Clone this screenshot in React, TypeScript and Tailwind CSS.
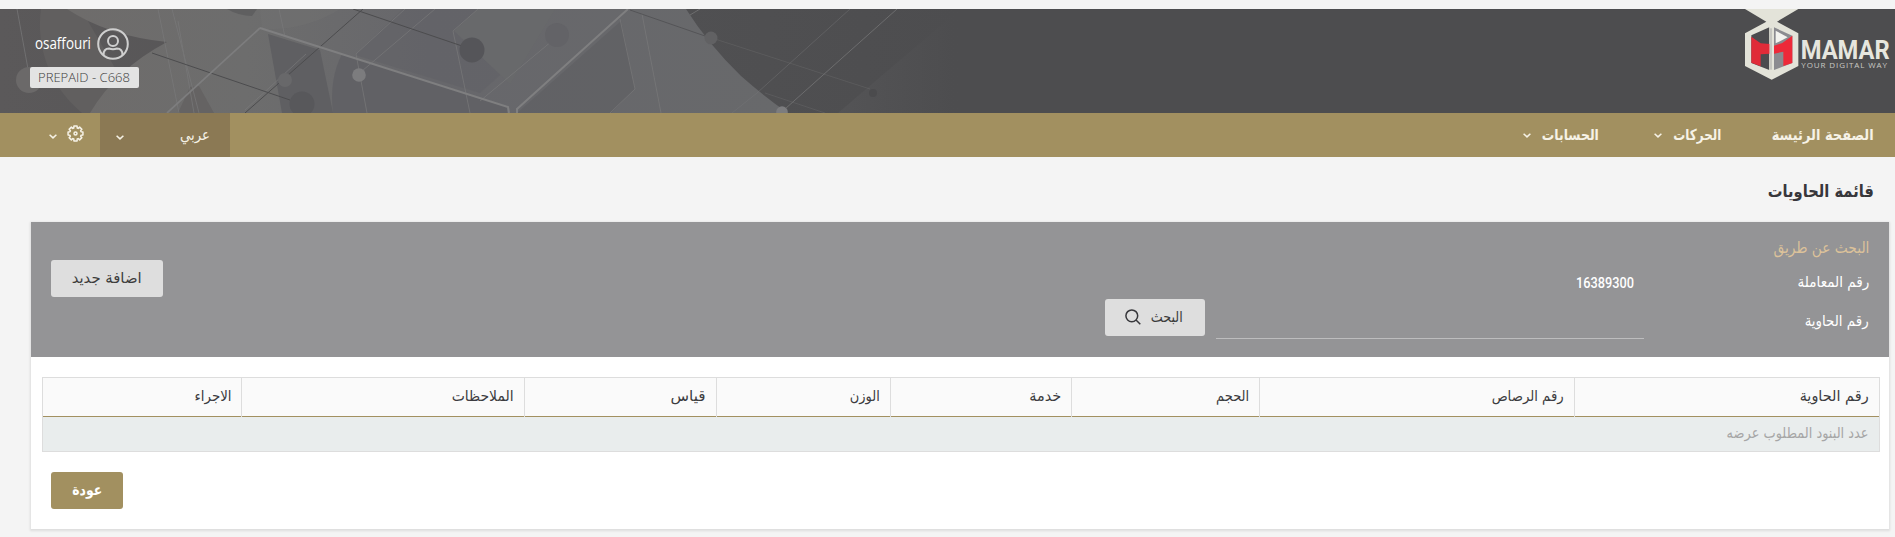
import { useLayoutEffect, useRef, useState } from "react";
import type { ReactNode } from "react";

/* Text squeezed or stretched horizontally so that it fills its box exactly. */
function Fit({ className, children, ltr }: { className: string; children: ReactNode; ltr?: boolean }) {
  const box = useRef<HTMLSpanElement>(null);
  const inner = useRef<HTMLSpanElement>(null);
  const [scale, setScale] = useState(1);
  useLayoutEffect(() => {
    if (box.current && inner.current) setScale(box.current.offsetWidth / inner.current.getBoundingClientRect().width);
  }, []);
  return (
    <span ref={box} dir={ltr ? "ltr" : "rtl"} className={`inline-block shrink-0 whitespace-nowrap ${className}`}>
      <span
        ref={inner}
        className={`inline-block ${ltr ? "origin-left" : "origin-right"}`}
        style={{ transform: `scaleX(${scale})` }}
      >
        {children}
      </span>
    </span>
  );
}

function Chevron({ className = "" }: { className?: string }) {
  return (
    <svg viewBox="0 0 8 5" className={`h-[5px] w-2 shrink-0 ${className}`} fill="none" stroke="#f6f2e6" strokeWidth="1.5">
      <path d="M.6.7 4 3.9 7.4.7" />
    </svg>
  );
}

function HeaderArt() {
  return (
    <svg viewBox="0 0 960 104" className="absolute left-0 top-0 h-[104px] w-[960px]" fill="none">
      <defs>
        <linearGradient id="base" x1="0" x2="1">
          <stop offset="0" stopColor="#5b595a" />
          <stop offset=".7" stopColor="#505052" />
          <stop offset="1" stopColor="#4d4d4f" />
        </linearGradient>
        <linearGradient id="light" x1="0" x2="1">
          <stop offset="0" stopColor="#6e6c6b" />
          <stop offset=".25" stopColor="#6d6d6d" />
          <stop offset=".5" stopColor="#67676b" />
          <stop offset="1" stopColor="#68696b" />
        </linearGradient>
        <linearGradient id="fade" gradientUnits="userSpaceOnUse" x1="840" x2="955" y1="0" y2="0">
          <stop offset="0" stopColor="#555557" />
          <stop offset="1" stopColor="#4d4d4f" />
        </linearGradient>
      </defs>
      <path d="M0 0h960v104H0z" fill="url(#base)" />
      <path d="M41 0h40l60 104H82C48 76 36 36 41 0Z" fill="#615f5f" />
      <path d="M67 0h619q22 35 55 67 25 22 47 37H90q26-44 77-71Q108 27 67 0Z" fill="url(#light)" />
      <path d="m268 25 52 16 13 63h-51Z" fill="#5f5f62" />
      <path d="M333 104q-4-34 9-59l165 52v7Z" fill="#616165" />
      <path d="m190 78 9-1 15 27h-36Z" fill="#656363" />
      <path d="m403 0-48 46 125 38 36-32-26-52Z" fill="#636367" opacity=".7" />
      <path d="m517 104 104-92 14 68-24 24Z" fill="#606064" opacity=".8" />
      <path d="m454 22 24-22h77l-45 75Z" fill="#68696b" />
      <path d="M227 0h30l-5 7q-13 0-25-7Z" fill="#5f5f60" />
      <path d="M260 0h80q-35 22-78 20Z" fill="#747374" opacity=".4" />
      <path d="M838 104 960 0v104Z" fill="url(#fade)" opacity=".8" />
      <g stroke="#7a7a7b" strokeWidth="1" opacity=".7">
        <path d="m17 0 11 60M158 0l21 104M172 0l27 104M178 12l16 92M279 0l6 28" />
        <path d="m405 0-49 45 11 59M435 0l-73 62M478 0l-25 22 17 82M306 45l-61 56M480 92l72-60" />
        <path d="m620 10 15 70-25 24M642 5l19 99M700 0l-10 6" />
        <path d="m850 0-93 84-25 20" opacity=".6" />
        <path d="M765 84l60 20M715 30l155 50" opacity=".4" />
      </g>
      <path d="M897 0 785 100" stroke="#747476" opacity=".8" />
      <g stroke="#4c4c4e" strokeWidth="1">
        <path d="M363 0 245 104M152 44l138 47M353 0l115 39" />
        <path d="m630 1 75 26" opacity=".7" />
      </g>
      <path d="m167 104 93-85" stroke="#7d7d7e" strokeWidth="1.7" />
      <path d="m260 19 248 79 1 6M517 104v-4L628 0" stroke="#7f7f80" strokeWidth="2" />
      <circle cx="302" cy="95" r="12.5" fill="#58585b" />
      <circle cx="472" cy="41" r="12.5" fill="#555559" />
      <circle cx="557" cy="26" r="12" fill="#636367" />
      <circle cx="285" cy="71" r="7" fill="#68686a" />
      <circle cx="359" cy="66" r="6.8" fill="#7c7c7e" />
      <circle cx="29" cy="71" r="13" fill="#6b6969" />
      <circle cx="711" cy="29" r="6.5" fill="#616163" />
      <circle cx="782" cy="103" r="5.8" fill="#7c7c7e" />
      <circle cx="873" cy="84" r="4" fill="#4b4b4d" />
    </svg>
  );
}

function Logo() {
  return (
    <svg viewBox="0 0 540 312" direction="ltr" className="relative h-[104px] w-[180px]">
      <path d="M90 0h160l-64 38 64 35v98l-80 41-80-41V73l64-35Z" fill="#e3e3d9" />
      <path d="m109 79 54-24v128l-54-21Z" fill="#4b4b4e" />
      <path d="m177 55 55 25v82l-55 21Z" fill="#8b8b90" />
      <path d="m109 83 28 20 28 2v29l-28 2v36l-28-11Z" fill="#e02b38" />
      <path d="m232 80-30 22-25 8v24l28-6v43l27-9Z" fill="#ed2939" />
      <path d="m182 65 36 20-36 18Z" fill="#f3f3ef" />
      <path d="M170 52v134" stroke="#e3e3d9" strokeWidth="13" />
      <path d="M168 58v124" stroke="#a9a9a8" strokeWidth="3" />
      <text x="257" y="151" fontSize="78" fontWeight="700" fontFamily="Roboto, sans-serif" textLength="267" lengthAdjust="spacingAndGlyphs" fill="#e6e6de">MAMAR</text>
      <text x="259" y="177" fontSize="24" fontFamily="Open Sans, sans-serif" textLength="257" lengthAdjust="spacing" fill="#c9c9c4">YOUR DIGITAL WAY</text>
    </svg>
  );
}

const columns = [
  { label: "رقم الحاوية", col: "w-[305px]", text: "w-[69px]" },
  { label: "رقم الرصاص", col: "w-[315px]", text: "w-[72px]" },
  { label: "الحجم", col: "w-[188px]", text: "w-[33px]" },
  { label: "خدمة", col: "w-[181px]", text: "w-[32px]" },
  { label: "الوزن", col: "w-[174px]", text: "w-[30px]" },
  { label: "قياس", col: "w-[192px]", text: "w-[35px]" },
  { label: "الملاحظات", col: "w-[283px]", text: "w-[62px]" },
  { label: "الاجراء", col: "w-[198px]", text: "w-[37px]" },
];

export default function App() {
  return (
    <div dir="rtl" className="h-[537px] w-[1895px] overflow-hidden bg-[#f4f4f4] pt-[9px] font-['DejaVu_Sans',sans-serif] text-[15px] leading-[20px]">
      <header className="relative flex h-[104px] justify-between bg-[#4d4d4f]">
        <HeaderArt />
        <Logo />
        <div dir="ltr" className="relative w-[180px] pl-[30px] pt-[19px]">
          <div className="flex h-8 items-center gap-[7px] pl-[5px]">
            <Fit ltr className="mb-[3px] w-[56px] font-['Open_Sans',sans-serif] text-[16px] text-white">osaffouri</Fit>
            <svg viewBox="0 0 32 32" className="-ml-px h-8 w-8" fill="none" stroke="#cfcfcf" strokeWidth="2">
              <circle cx="16" cy="16" r="14.8" />
              <circle cx="16" cy="13" r="5" />
              <path d="M6.500 27c0-5 2.500-6.500 5.500-6.500q4 1.500 8 0c3 0 5.500 1.500 5.500 6.500" />
            </svg>
          </div>
          <div className="mt-[7px] flex h-[21px] w-[109px] items-center rounded-[2px] bg-[#e3e3e3] pb-px pl-2">
            <Fit ltr className="w-[92px] font-['Open_Sans',sans-serif] text-[13px] font-light text-[#3c3c3c]">PREPAID - C668</Fit>
          </div>
        </div>
      </header>

      <nav className="flex h-11 items-center bg-[#a29060] pr-[21px] font-bold text-[#f6f2e6]">
        <Fit className="w-[102px]">الصفحة الرئيسة</Fit>
        <Fit className="mr-[51px] w-[48px]">الحركات</Fit>
        <Chevron className="mr-[11px] mt-px" />
        <Fit className="mr-[55px] w-[57px]">الحسابات</Fit>
        <Chevron className="mr-[11px] mt-px" />
        <div className="mr-auto flex h-11 w-[130px] items-center justify-between bg-[#8b7954] pl-4 pr-[20px] font-normal">
          <Fit className="w-[30px]">عربي</Fit>
          <Chevron className="mt-1" />
        </div>
        <div className="flex h-11 w-[100px] items-center pr-4">
          <svg viewBox="-8.5 -8.5 17 17" className="mb-1 h-[17px] w-[17px]" fill="none" stroke="#f6f2e6" strokeWidth="1.500" strokeLinejoin="round">
            <path d="M5.550-1.700 7.430-1.580V1.580L5.550 1.700 5.120 2.720 6.370 4.140 4.140 6.370 2.720 5.120 1.700 5.550 1.580 7.430H-1.580L-1.700 5.550-2.720 5.120-4.140 6.370-6.370 4.140-5.120 2.720-5.550 1.700-7.430 1.580V-1.580L-5.550-1.700-5.120-2.720-6.370-4.140-4.140-6.370-2.720-5.120-1.700-5.550-1.580-7.430H1.580L1.700-5.550 2.720-5.120 4.140-6.370 6.370-4.140 5.120-2.720Z" />
            <circle r="1.500" />
          </svg>
          <Chevron className="mr-[10px] mt-0.5" />
        </div>
      </nav>

      <h1 className="flex h-[65px] items-center pr-[21px] pt-[3px] text-[17px] font-bold text-[#37373b]">
        <Fit className="w-[106px]">قائمة الحاويات</Fit>
      </h1>

      <main className="ml-[31px] mr-1.5 h-[307px] w-[1858px] bg-white shadow-[0_1px_2px_1px_#dddddd]">
        <section className="flex h-[135px] justify-between bg-[#949496] pl-5 pr-5 text-white">
          <div className="pt-[13px]">
            <h2 className="mb-[3px] flex h-[26px] items-center text-[16px] text-[#dcc29a]">
              <Fit className="w-[96px]">البحث عن طريق</Fit>
            </h2>
            <div className="flex h-[38px] items-center">
              <div className="flex w-[235px] pb-0.5"><Fit className="w-[72px]">رقم المعاملة</Fit></div>
              <Fit ltr className="w-[58px] font-[Roboto,sans-serif] text-[14px] font-medium">16389300</Fit>
            </div>
            <div className="flex h-[37px]">
              <div className="flex w-[225px] pt-[9px]"><Fit className="w-[64px]">رقم الحاوية</Fit></div>
              <div className="h-[37px] w-[428px] border-b border-[#bdbdbe]" />
              <button className="-mt-[3px] mr-[11px] flex h-[37px] w-[100px] items-center gap-[10px] rounded-[3px] bg-[#dedede] pb-0.5 pr-[22px] text-[#3c3c3c]">
                <Fit className="w-[32px]">البحث</Fit>
                <svg viewBox="0 0 16 16" className="h-4 w-4" fill="none" stroke="#37373b" strokeWidth="1.500">
                  <circle cx="6.800" cy="6.800" r="5.900" />
                  <path d="m11 11 4.300 4.200" />
                </svg>
              </button>
            </div>
          </div>
          <button className="mt-[38px] flex h-[37px] w-[112px] items-center justify-center rounded-[3px] bg-[#dedede] pb-0.5 text-[#3c3c3c]">
            <Fit className="w-[70px]">اضافة جديد</Fit>
          </button>
        </section>

        <div className="mr-[9px] mt-5 w-[1838px] border border-[#dddddd]">
          <div className="flex h-[39px] border-b border-[#a29060] bg-[#fafafa] text-[#3c3c40]">
            {columns.map((c) => (
              <div key={c.label} className={`${c.col} flex h-[39px] shrink-0 items-center border-l border-[#dddddd] pb-[3px] pr-[10px] last:border-l-0`}>
                <Fit className={c.text}>{c.label}</Fit>
              </div>
            ))}
          </div>
          <div className="flex h-[34px] items-center bg-[#e9eded] pb-0.5 pr-[10px] text-[#a6a6a6]">
            <Fit className="w-[142px]">عدد البنود المطلوب عرضه</Fit>
          </div>
        </div>

        <div className="flex justify-end pl-5 pt-5">
          <button className="flex h-[37px] w-[72px] items-center justify-center rounded-[3px] bg-[#a29060] pb-0.5 text-white">
            <Fit className="w-[30px] font-bold">عودة</Fit>
          </button>
        </div>
      </main>
    </div>
  );
}
